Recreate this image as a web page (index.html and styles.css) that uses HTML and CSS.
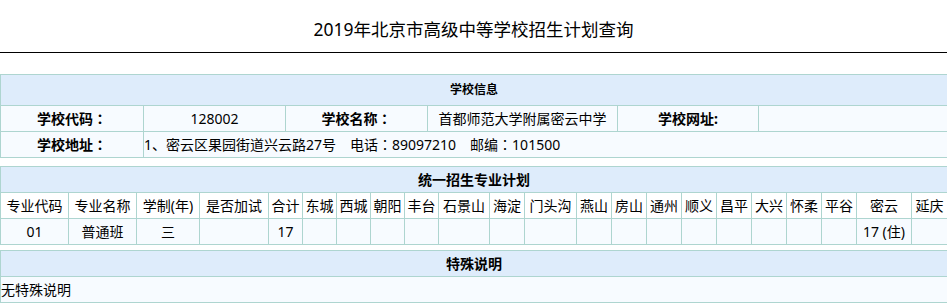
FILE: index.html
```html
<!DOCTYPE html>
<html lang="zh-CN">
<head>
<meta charset="utf-8">
<title>2019年北京市高级中等学校招生计划查询</title>
<link rel="stylesheet" href="styles.css">
</head>
<body>
<h1 class="page-title">2019年北京市高级中等学校招生计划查询</h1>

<section class="sheet sheet-school">
  <div class="cell band band-small">学校信息</div>
  <div class="cell label">学校代码<span class="colon" lang="zh-TW">：</span></div>
  <div class="cell">128002</div>
  <div class="cell label">学校名称<span class="colon" lang="zh-TW">：</span></div>
  <div class="cell">首都师范大学附属密云中学</div>
  <div class="cell label">学校网址:</div>
  <div class="cell"></div>
  <div class="cell label">学校地址<span class="colon" lang="zh-TW">：</span></div>
  <div class="cell left span5">1、密云区果园街道兴云路27号　电话<span class="colon" lang="zh-TW">：</span>89097210　邮编<span class="colon" lang="zh-TW">：</span>101500</div>
</section>

<section class="sheet sheet-plan">
  <div class="cell band">统一招生专业计划</div>
  <div class="cell head">专业代码</div>
  <div class="cell head">专业名称</div>
  <div class="cell head">学制(年)</div>
  <div class="cell head">是否加试</div>
  <div class="cell head">合计</div>
  <div class="cell head">东城</div>
  <div class="cell head">西城</div>
  <div class="cell head">朝阳</div>
  <div class="cell head">丰台</div>
  <div class="cell head">石景山</div>
  <div class="cell head">海淀</div>
  <div class="cell head">门头沟</div>
  <div class="cell head">燕山</div>
  <div class="cell head">房山</div>
  <div class="cell head">通州</div>
  <div class="cell head">顺义</div>
  <div class="cell head">昌平</div>
  <div class="cell head">大兴</div>
  <div class="cell head">怀柔</div>
  <div class="cell head">平谷</div>
  <div class="cell head">密云</div>
  <div class="cell head">延庆</div>

  <div class="cell">01</div>
  <div class="cell">普通班</div>
  <div class="cell">三</div>
  <div class="cell"></div>
  <div class="cell">17</div>
  <div class="cell"></div>
  <div class="cell"></div>
  <div class="cell"></div>
  <div class="cell"></div>
  <div class="cell"></div>
  <div class="cell"></div>
  <div class="cell"></div>
  <div class="cell"></div>
  <div class="cell"></div>
  <div class="cell"></div>
  <div class="cell"></div>
  <div class="cell"></div>
  <div class="cell"></div>
  <div class="cell"></div>
  <div class="cell"></div>
  <div class="cell">17 (住)</div>
  <div class="cell"></div>
</section>

<section class="sheet sheet-note">
  <div class="cell band">特殊说明</div>
  <div class="cell left">无特殊说明</div>
</section>
</body>
</html>
```

FILE: styles.css
```css
html, body {
  margin: 0;
  padding: 0;
  overflow: hidden;
  background: #ffffff;
}

body {
  font-family: "Noto Sans", "Noto Sans CJK SC", sans-serif;
  font-size: 14px;
  color: #000;
}

.page-title {
  margin: 0;
  padding-top: 7px;
  height: 45px;
  line-height: 45px;
  font-size: 17.5px;
  font-weight: normal;
  text-align: center;
  border-bottom: 1px solid #000;
}

.sheet {
  display: grid;
  width: 948px;
  box-sizing: border-box;
  border-top: 1px solid #aed5d0;
  border-left: 1px solid #aed5d0;
}

.sheet-school {
  margin-top: 21px;
  grid-template-columns: 143px 142px 142px 190px 141px 189px;
}

.sheet-plan {
  margin-top: 8px;
  grid-template-columns: 68px 68px 63px 69px 34px 34px 34px 34px 34px 51px 35px 52px 35px 35px 35px 35px 35px 35px 35px 35px 55px 36px;
}

.sheet-note {
  margin-top: 5px;
  grid-template-columns: 947px;
}

.cell {
  box-sizing: border-box;
  height: 26px;
  line-height: 25px;
  border-right: 1px solid #aed5d0;
  border-bottom: 1px solid #aed5d0;
  background: #f7fbff;
  text-align: center;
  white-space: nowrap;
  overflow: hidden;
}

.colon {
  font-family: "Noto Sans CJK TC", "Noto Sans CJK SC", sans-serif;
}

.band {
  grid-column: 1 / -1;
  background: #deecfb;
  font-weight: bold;
}

.band-small {
  height: 31px;
  line-height: 30px;
  font-size: 12px;
}

.label {
  font-weight: bold;
}

.head {
  background: #ffffff;
}

.left {
  text-align: left;
}

.span5 {
  grid-column: span 5;
}
```
